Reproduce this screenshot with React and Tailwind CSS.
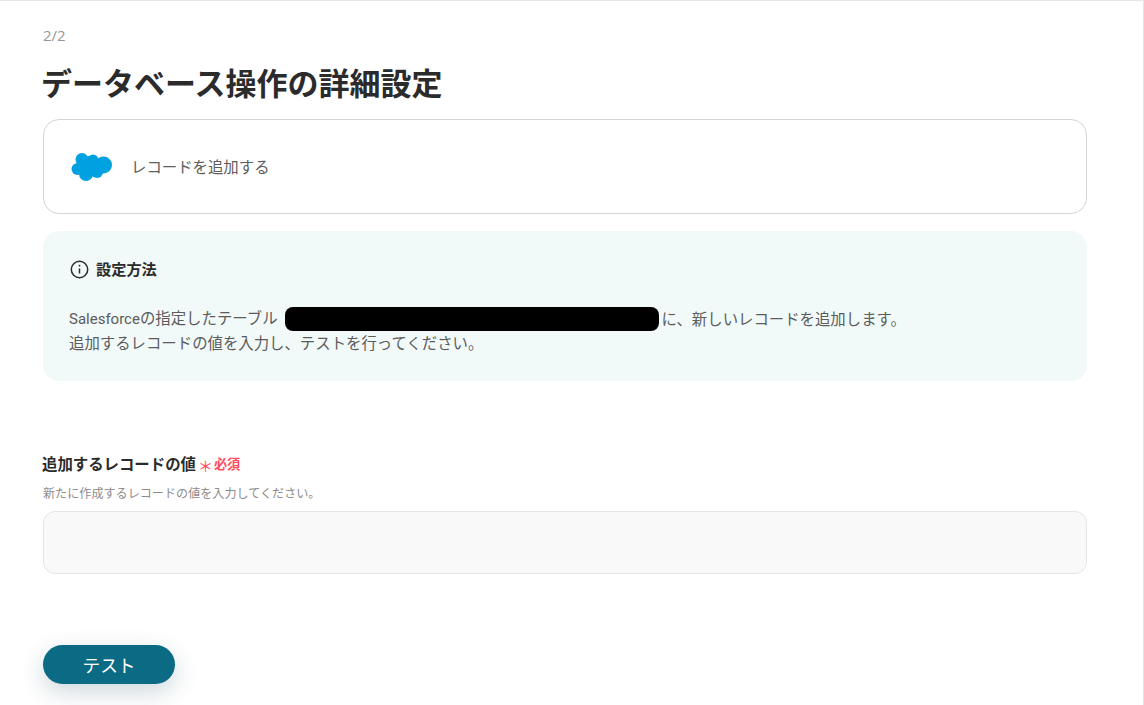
const font = { fontFamily: '"Noto Sans CJK JP", sans-serif' };

function SalesforceLogo() {
  return (
    <svg width="41" height="30" viewBox="0 0 41 30" aria-hidden="true">
      <g fill="#00a1e0">
        <circle cx="11" cy="7.5" r="6.5" />
        <circle cx="22" cy="8" r="5.5" />
        <circle cx="32.5" cy="13" r="8.5" />
        <circle cx="6.5" cy="17" r="6" />
        <circle cx="15" cy="22" r="7" />
        <circle cx="26" cy="20" r="6" />
        <circle cx="18" cy="14" r="10" />
      </g>
    </svg>
  );
}

function InfoIcon() {
  return (
    <svg className="ml-[1px]" width="19" height="19" viewBox="0 0 19 19" fill="none" stroke="#2b2b2b" strokeWidth="1.5" aria-hidden="true">
      <circle cx="9.5" cy="9.5" r="8.2" />
      <path d="M9.5 8.5v5" />
      <path d="M9.5 4.8v1.7" />
    </svg>
  );
}

export default function App() {
  return (
    <div style={font} className="h-[705px] w-[1144px] overflow-hidden bg-white border-t border-r border-[#e6e6e6]">
      <div className="w-[1044px] ml-[43px]">
        <p className="pt-[24px] text-[15px] leading-[20px] text-[#969696]" style={{ fontFamily: '"Open Sans", "Noto Sans CJK JP", sans-serif' }}>2/2</p>
        <h1 className="mt-[16px] -ml-[2px] text-[31px] leading-[42px] font-bold text-[#2b2b2b]">データベース操作の詳細設定</h1>
        <div className="mt-[16px] h-[95px] rounded-[16px] border border-[#d4d4d4] flex items-center pl-[27px]">
          <SalesforceLogo />
          <span className="ml-[19px] text-[15.4px] text-[#5c5c5c]">レコードを追加する</span>
        </div>
        <div className="mt-[17px] h-[150px] rounded-[16px] bg-[#f1f9f9] pl-[26px] pt-[28px]">
          <div className="flex items-center gap-[7px] h-[20px]">
            <InfoIcon />
            <span className="pb-[2px] text-[15.2px] font-bold text-[#2b2b2b]">設定方法</span>
          </div>
          <div className="mt-[28px] text-[15.4px] leading-[24px] text-[#5c5c5c]">
            <div className="flex items-center h-[24px]">
              <span className="pb-[2px]"><span style={{ fontFamily: 'Roboto, sans-serif' }} className="text-[15px]">Salesforce</span>の指定したテーブル</span>
              <span className="ml-[7px] mr-[3px] w-[374px] h-[24px] rounded-[8px] bg-black"></span>
              <span className="pb-[2px]">に、新しいレコードを追加します。</span>
            </div>
            <div className="leading-[22px]">追加するレコードの値を入力し、テストを行ってください。</div>
          </div>
        </div>
        <div className="mt-[73px] -ml-[1px] flex items-center h-[20px]">
          <span className="text-[15.4px] font-bold text-[#2b2b2b]">追加するレコードの値</span>
          <span className="ml-[2px] flex items-center text-[13.2px] font-bold text-[#ff4d5e]"><span className="font-normal text-[15px] mt-[4px] mr-[1px]">＊</span>必須</span>
        </div>
        <p className="mt-[11px] text-[12.1px] leading-[16px] text-[#8c8c8c]">新たに作成するレコードの値を入力してください。</p>
        <div className="mt-[10px] h-[63px] rounded-[12px] border border-[#e3e5e8] bg-[#f9f9f9]"></div>
        <button className="mt-[71px] block w-[132px] h-[39px] rounded-full bg-[#0b6a84] text-white text-[17.6px] leading-[39px] shadow-[0_8px_24px_rgba(11,60,80,0.2)]">テスト</button>
      </div>
    </div>
  );
}
